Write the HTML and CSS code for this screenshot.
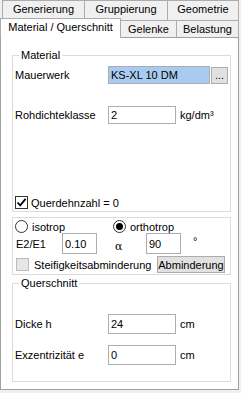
FILE: index.html
```html
<!DOCTYPE html>
<html lang="de">
<head>
    <meta charset="UTF-8">
    <title>Material / Querschnitt</title>
    <link rel="stylesheet" href="styles.css">
</head>
<body>
    <div class="tabs-back">
        <span class="tab tab-gen">Generierung</span>
        <span class="tab tab-grp">Gruppierung</span>
        <span class="tab tab-geo">Geometrie</span>
    </div>
    <div class="tabs-front">
        <span class="tab active tab-mat">Material / Querschnitt</span>
        <span class="tab tab-gel">Gelenke</span>
        <span class="tab tab-bel">Belastung</span>
    </div>

    <div class="panel">
        <fieldset class="group group-material">
            <legend>Material</legend>
            <div class="row row-mauer">
                <label class="lbl">Mauerwerk</label>
                <input class="field field-wide selected" type="text" value="KS-XL 10 DM" readonly>
                <button class="btn btn-dots" type="button">...</button>
            </div>
            <div class="row row-dichte">
                <label class="lbl">Rohdichteklasse</label>
                <input class="field" type="text" value="2">
                <span class="unit">kg/dm³</span>
            </div>
            <div class="row row-check">
                <span class="check checked">
                    <svg width="11" height="11" viewBox="0 0 11 11"><path d="M1.5 5.5 L4.2 8.3 L9.6 1.8" fill="none" stroke="#000" stroke-width="1.8"/></svg>
                </span>
                <span class="check-lbl">Querdehnzahl = 0</span>
            </div>
        </fieldset>

        <div class="group group-ortho">
            <div class="row row-radio">
                <span class="opt opt-iso"><span class="radio"></span>isotrop</span>
                <span class="opt"><span class="radio on"></span>orthotrop</span>
            </div>
            <div class="row row-e2">
                <label class="lbl lbl-e2">E2/E1</label>
                <input class="field field-small" type="text" value="0.10">
                <span class="alpha">α</span>
                <input class="field field-small" type="text" value="90">
                <span class="deg">°</span>
            </div>
            <div class="row row-steif">
                <span class="check disabled"></span>
                <span class="check-lbl steif-lbl">Steifigkeitsabminderung</span>
                <button class="btn btn-abm" type="button">Abminderung</button>
            </div>
        </div>

        <fieldset class="group group-quer">
            <legend>Querschnitt</legend>
            <div class="row row-dicke">
                <label class="lbl">Dicke h</label>
                <input class="field field-tall" type="text" value="24">
                <span class="unit">cm</span>
            </div>
            <div class="row row-exz">
                <label class="lbl">Exzentrizität e</label>
                <input class="field field-tall" type="text" value="0">
                <span class="unit">cm</span>
            </div>
        </fieldset>
    </div>
</body>
</html>
```

FILE: styles.css
```css
* {
    box-sizing: border-box;
}

body {
    margin: 0;
    width: 241px;
    height: 393px;
    overflow: hidden;
    background: #f0f0f0;
    color: #000;
    font: 11px "Liberation Sans", Arial, sans-serif;
}

/* tab strip, two rows */
.tabs-back {
    display: flex;
    height: 20px;
    margin-left: 2px;
}

.tabs-front {
    display: flex;
    align-items: flex-end;
    height: 19px;
    margin-top: -2px;
}

.tab {
    border: 1px solid #acacac;
    border-bottom: none;
    background: #f0f0f0;
    text-align: center;
    margin-right: -1px;
    white-space: nowrap;
}

.tabs-back .tab {
    height: 20px;
    padding-top: 2px;
}
.tab-gen { width: 83px; }
.tab-grp { width: 84px; }
.tab-geo { width: 72px; }

.tabs-front .tab {
    height: 17px;
    padding-top: 2px;
}
.tab-gel { width: 57px; }
.tab-bel { width: 63px; }

.tabs-front .tab.active {
    position: relative;
    z-index: 1;
    width: 121px;
    height: 20px;
    margin-bottom: -1px;
    padding-top: 2px;
    background: #fff;
}

.panel {
    width: 239px;
    height: 353px;
    border: 1px solid #a0a0a0;
    background: #fff;
    overflow: hidden;
}

/* group boxes */
.group {
    width: 219px;
    margin: 0 0 0 11px;
    padding: 0 0 0 2px;
    border: 1px solid #dcdcdc;
    min-inline-size: 0;
}

.group legend {
    margin-left: 4px;
    padding: 0 2px;
    line-height: 13px;
}

.group-material {
    margin-top: 11px;
    padding-bottom: 2px;
}

.group-ortho {
    margin-top: 5px;
    padding-bottom: 1px;
}

.group-quer {
    margin-top: 2px;
    padding-bottom: 16px;
}

.row {
    display: flex;
    align-items: center;
}

.lbl {
    width: 93px;
    flex: none;
}

.field {
    height: 18px;
    width: 68px;
    border: 1px solid #abadb3;
    padding: 0 0 0 2px;
    margin: 0;
    font: 11px "Liberation Sans", Arial, sans-serif;
    color: #000;
    background: #fff;
    outline: none;
}

.field.selected {
    background: #aacbf0;
}

.field-wide {
    width: 102px;
}

.field-tall {
    height: 20px;
}

.field-small {
    height: 21px;
    width: 35px;
}

.unit {
    margin-left: 4px;
}

.btn {
    margin: 0;
    padding: 0;
    border: 1px solid #adadad;
    background: #e1e1e1;
    font: 11px "Liberation Sans", Arial, sans-serif;
    color: #000;
}

.btn-dots {
    width: 17px;
    height: 17px;
    margin-left: 1px;
    line-height: 11px;
}

.row-mauer { margin-top: 4px; height: 18px; }
.row-dichte { margin-top: 22px; height: 18px; }
.row-check { margin-top: 72px; height: 13px; }

.check {
    width: 13px;
    height: 13px;
    flex: none;
    border: 1px solid #333;
    background: #fff;
    display: flex;
    align-items: center;
    justify-content: center;
}

.check.disabled {
    margin-left: 1px;
    border-color: #bcbcbc;
    background: #e6e6e6;
}

.check-lbl {
    margin-left: 3px;
}

/* isotrop / orthotrop */
.row-radio {
    margin-top: 2px;
    height: 13px;
}

.opt {
    display: flex;
    align-items: center;
    gap: 4px;
}

.opt-iso {
    width: 98px;
}

.radio {
    width: 13px;
    height: 13px;
    border: 1px solid #333;
    border-radius: 50%;
    background: #fff;
    display: flex;
    align-items: center;
    justify-content: center;
}

.radio.on::after {
    content: "";
    width: 7px;
    height: 7px;
    border-radius: 50%;
    background: #000;
}

.row-e2 {
    height: 21px;
}

.lbl-e2 {
    width: 46px;
    margin-left: 1px;
}

.alpha {
    width: 49px;
    padding-left: 18px;
    padding-top: 5px;
    font-family: "DejaVu Serif", serif;
    font-size: 11px;
}

.deg {
    margin-left: 12px;
    margin-top: -6px;
}

.row-steif {
    margin-top: 2px;
    height: 17px;
}

.steif-lbl {
    margin-left: 5px;
}

.btn-abm {
    width: 68px;
    height: 17px;
    margin-left: auto;
    margin-right: 5px;
}

.row-dicke { margin-top: 24px; height: 20px; }
.row-exz { margin-top: 11px; height: 20px; }
```
